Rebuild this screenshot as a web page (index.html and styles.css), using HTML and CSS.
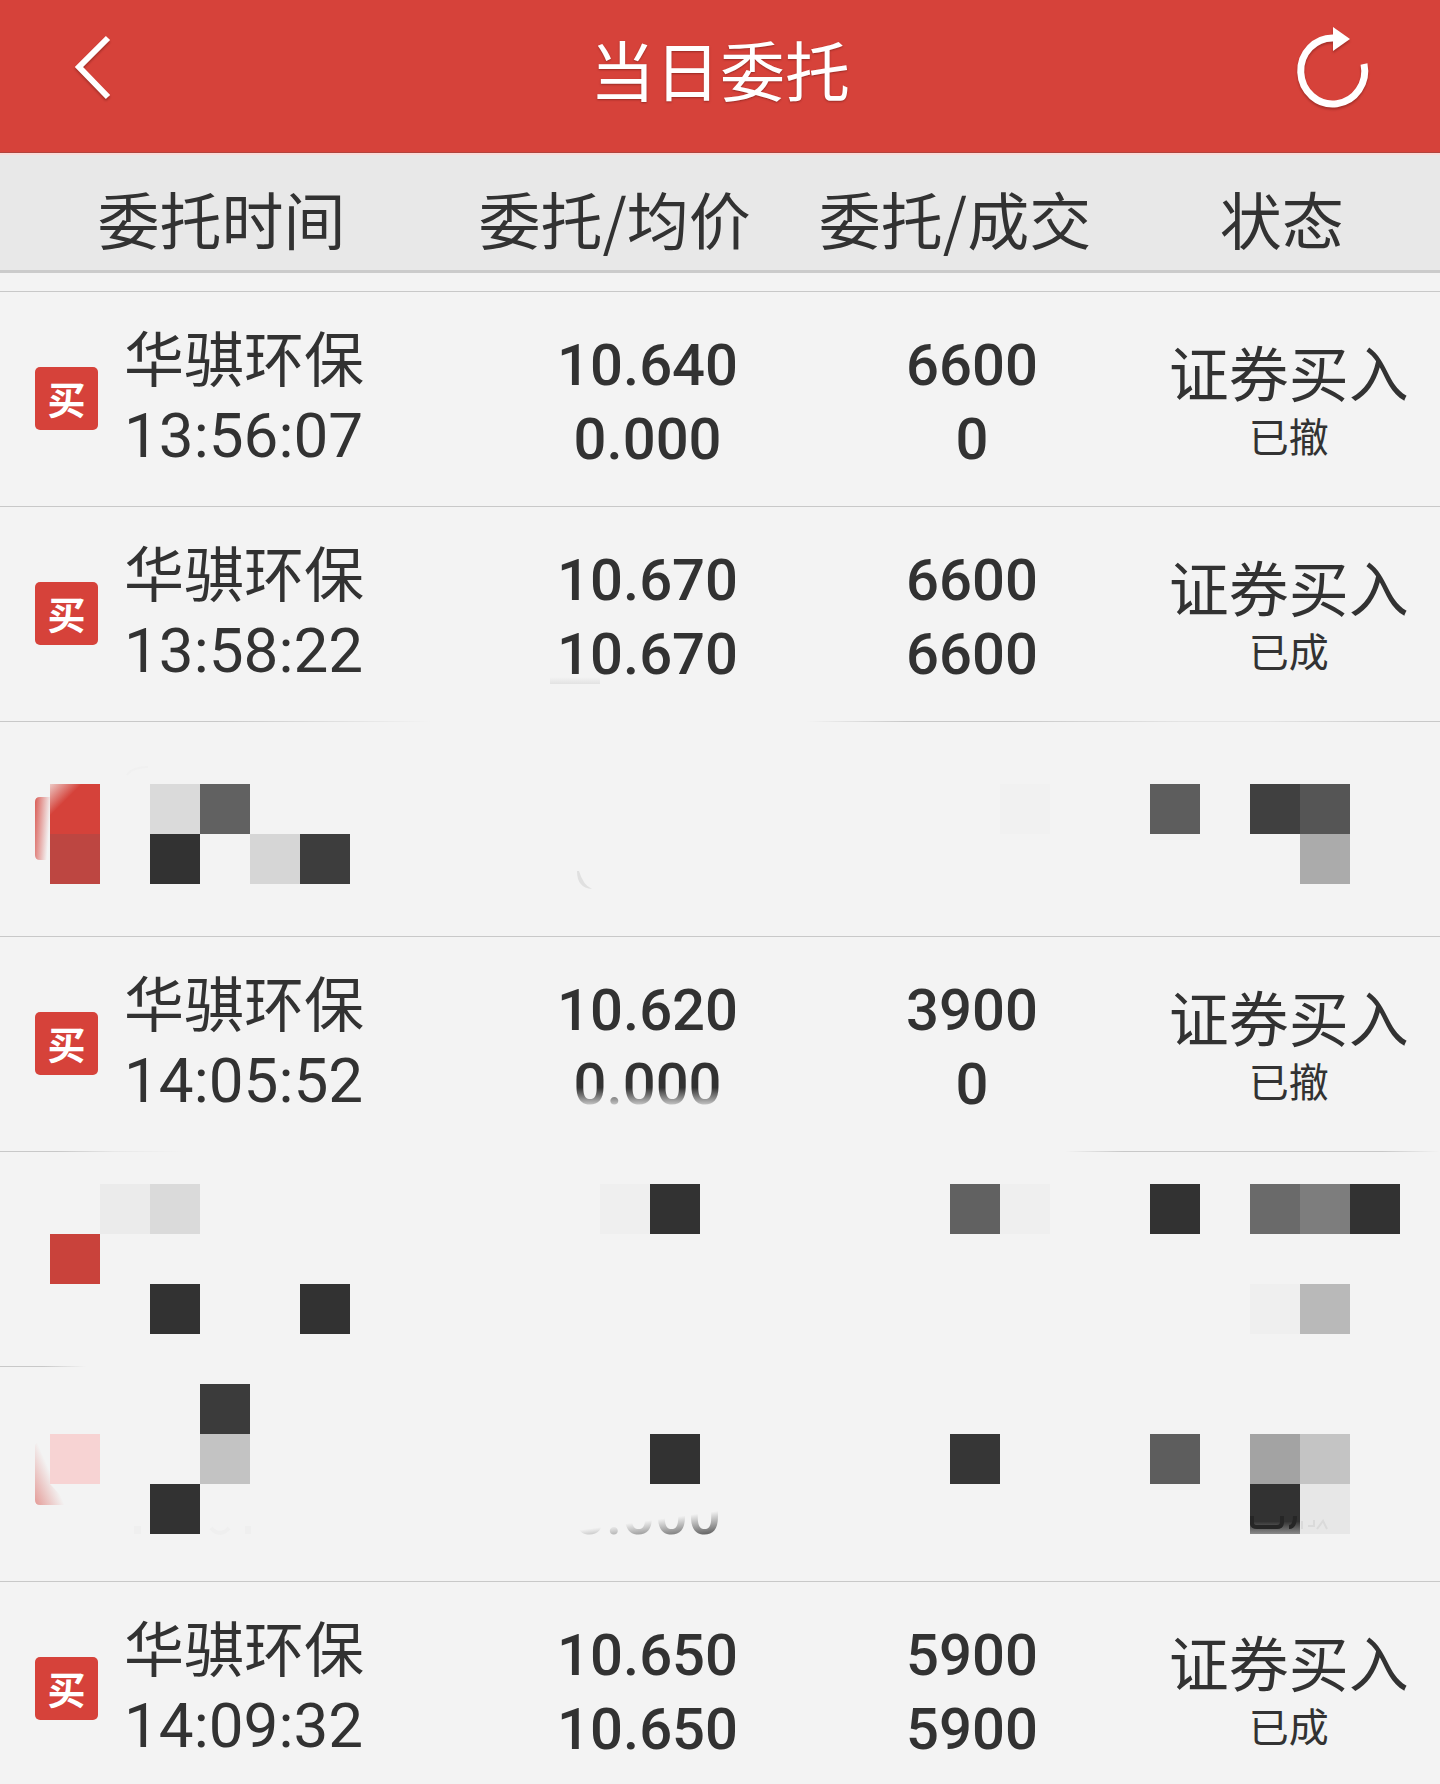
FILE: index.html
```html
<!DOCTYPE HTML>
<html lang="zh-CN">
	<head>
		<meta charset="UTF-8" />
		<meta name="viewport" content="width=device-width, initial-scale=1">
		<title>当日委托</title>
		<link rel="stylesheet" href="styles.css">
	</head>
	<body>
		<header class="topbar">
			<button type="button" class="icon_btn" aria-label="返回">
				<svg width="98" height="100" viewBox="0 0 98 100">
					<path d="M62 20 L33 49 L62 79" fill="none" stroke="#fff" stroke-width="6" />
				</svg>
			</button>
			<h1 class="title">当日委托</h1>
			<button type="button" class="icon_btn" aria-label="刷新">
				<svg width="98" height="100" viewBox="0 0 98 100">
					<path d="M38 20 A32 33 0 1 0 68 46" fill="none" stroke="#fff" stroke-width="7" />
					<path d="M37 9 L54 21 L37 33 Z" fill="#fff" />
				</svg>
			</button>
		</header>

		<table class="orders">
			<thead>
				<tr>
					<th class="col_time">委托时间</th>
					<th class="col_price">委托/均价</th>
					<th class="col_amount">委托/成交</th>
					<th class="col_state">状态</th>
				</tr>
			</thead>
			<tbody>
				<tr class="spacer"><td colspan="4"></td></tr>
				<tr class="order">
					<td>
						<div class="stock">
							<span class="badge">买</span>
							<div><div class="name">华骐环保</div><div class="time">13:56:07</div></div>
						</div>
					</td>
					<td class="num price"><div>10.640</div><div>0.000</div></td>
					<td class="num"><div>6600</div><div>0</div></td>
					<td class="state"><div class="kind">证券买入</div><div class="result">已撤</div></td>
				</tr>
				<tr class="order">
					<td>
						<div class="stock">
							<span class="badge">买</span>
							<div><div class="name">华骐环保</div><div class="time">13:58:22</div></div>
						</div>
					</td>
					<td class="num price"><div>10.670</div><div>10.670</div></td>
					<td class="num"><div>6600</div><div>6600</div></td>
					<td class="state"><div class="kind">证券买入</div><div class="result">已成</div></td>
				</tr>
				<tr class="order line_gap_mid">
					<td colspan="4" class="masked">
						<svg class="mosaic" viewBox="0 0 1440 215" aria-hidden="true">
							<defs>
								<linearGradient id="edge_a" x1="0" y1="0" x2="1" y2="0.3">
									<stop offset="0" stop-color="#d5423a" stop-opacity="0.85" />
									<stop offset="1" stop-color="#d5423a" stop-opacity="0" />
								</linearGradient>
								<linearGradient id="corner" x1="0" y1="0" x2="0.4" y2="0.4">
									<stop offset="0" stop-color="#ecc9c5" />
									<stop offset="0.8" stop-color="#d5423a" />
								</linearGradient>
								<linearGradient id="smudge" x1="0" y1="0" x2="0" y2="1">
									<stop offset="0" stop-color="#f3f3f3" />
									<stop offset="1" stop-color="#e2e2e2" />
								</linearGradient>
							</defs>
							<rect x="550" y="-44" width="50" height="7" fill="url(#smudge)" />
							<path d="M127 54 Q132 46 148 46" fill="none" stroke="#f0f0f0" stroke-width="2" />
							<path d="M577 150 Q577 167 592 168 Q583 164 579 150 Z" fill="#e0e0e0" />
							<path d="M50 76 H40 Q35 76 35 81 V134 Q35 139 40 139 H50 Z" fill="url(#edge_a)" />
							<rect x="50" y="63" width="50" height="50" fill="url(#corner)" />
							<rect x="50" y="113" width="50" height="50" fill="#bd4641" />
							<rect x="150" y="63" width="50" height="50" fill="#dadada" />
							<rect x="200" y="63" width="50" height="50" fill="#616161" />
							<rect x="150" y="113" width="50" height="50" fill="#323232" />
							<rect x="250" y="113" width="50" height="50" fill="#d6d6d6" />
							<rect x="300" y="113" width="50" height="50" fill="#3d3d3d" />
							<rect x="1000" y="63" width="50" height="50" fill="#f1f1f1" />
							<rect x="1150" y="63" width="50" height="50" fill="#5d5d5d" />
							<rect x="1250" y="63" width="50" height="50" fill="#404040" />
							<rect x="1300" y="63" width="50" height="50" fill="#555" />
							<rect x="1300" y="113" width="50" height="50" fill="#ababab" />
						</svg>
					</td>
				</tr>
				<tr class="order">
					<td>
						<div class="stock">
							<span class="badge">买</span>
							<div><div class="name">华骐环保</div><div class="time">14:05:52</div></div>
						</div>
					</td>
					<td class="num price"><div>10.620</div><div class="fading">0.000</div></td>
					<td class="num"><div>3900</div><div>0</div></td>
					<td class="state"><div class="kind">证券买入</div><div class="result">已撤</div></td>
				</tr>
				<tr class="order line_ends">
					<td colspan="4" class="masked">
						<svg class="mosaic" viewBox="0 0 1440 215" aria-hidden="true">
							<rect x="100" y="33" width="50" height="50" fill="#ebebeb" />
							<rect x="150" y="33" width="50" height="50" fill="#dadada" />
							<rect x="50" y="83" width="50" height="50" fill="#c9423b" />
							<rect x="150" y="133" width="50" height="50" fill="#323232" />
							<rect x="300" y="133" width="50" height="50" fill="#323232" />
							<rect x="600" y="33" width="50" height="50" fill="#efefef" />
							<rect x="650" y="33" width="50" height="50" fill="#323232" />
							<rect x="950" y="33" width="50" height="50" fill="#616161" />
							<rect x="1000" y="33" width="50" height="50" fill="#efefef" />
							<rect x="1150" y="33" width="50" height="50" fill="#323232" />
							<rect x="1250" y="33" width="50" height="50" fill="#6a6a6a" />
							<rect x="1300" y="33" width="50" height="50" fill="#7d7d7d" />
							<rect x="1350" y="33" width="50" height="50" fill="#323232" />
							<rect x="1250" y="133" width="50" height="50" fill="#efefef" />
							<rect x="1300" y="133" width="50" height="50" fill="#b9b9b9" />
						</svg>
					</td>
				</tr>
				<tr class="order line_start">
					<td colspan="4" class="masked">
						<svg class="mosaic" viewBox="0 0 1440 215" aria-hidden="true">
							<defs>
								<linearGradient id="edge_b" gradientUnits="userSpaceOnUse" x1="35" y1="139" x2="60" y2="128">
									<stop offset="0" stop-color="#d5423a" stop-opacity="0.5" />
									<stop offset="1" stop-color="#d5423a" stop-opacity="0" />
								</linearGradient>
								<linearGradient id="ghost" gradientUnits="userSpaceOnUse" x1="565" y1="166" x2="569" y2="195">
									<stop offset="0" stop-color="#323232" stop-opacity="0" />
									<stop offset="1" stop-color="#323232" />
								</linearGradient>
								<linearGradient id="block_end" x1="0" y1="0" x2="0" y2="1">
									<stop offset="0.75" stop-color="#323232" />
									<stop offset="1" stop-color="#8a8a8a" />
								</linearGradient>
							</defs>
							<path d="M70 139 H40 Q35 139 35 134 V81 Q35 76 40 76 H50 V118 Z" fill="url(#edge_b)" />
							<rect x="50" y="68" width="50" height="50" fill="#f7d3d3" />
							<rect x="200" y="18" width="50" height="50" fill="#3b3b3b" />
							<rect x="200" y="68" width="50" height="50" fill="#c3c3c3" />
							<rect x="150" y="118" width="50" height="50" fill="#323232" />
							<rect x="134" y="160" width="7" height="8" fill="#efefef" />
							<path d="M211 162 Q220 172 229 162" fill="none" stroke="#efefef" stroke-width="4" />
							<rect x="245" y="160" width="6" height="8" fill="#efefef" />
							<rect x="650" y="68" width="50" height="50" fill="#323232" />
							<rect x="950" y="68" width="50" height="50" fill="#363636" />
							<rect x="1150" y="68" width="50" height="50" fill="#5d5d5d" />
							<rect x="1250" y="68" width="50" height="50" fill="#a3a3a3" />
							<rect x="1300" y="68" width="50" height="50" fill="#c4c4c4" />
							<rect x="1250" y="118" width="50" height="50" fill="url(#block_end)" />
							<rect x="1300" y="118" width="50" height="50" fill="#e7e7e7" />
							<path d="M1252 150 V157 Q1252 161 1257 161 H1277 Q1282 161 1282 156 V150 M1295 150 Q1295 161 1289 161" fill="none" stroke="#262626" stroke-width="4" />
							<path d="M1302 155 V163 M1308 160 H1314 V154 M1317 163 L1323 155 L1327 163" fill="none" stroke="#dadada" stroke-width="2" />
							<text class="ghost" x="647" y="168" text-anchor="middle" fill="url(#ghost)">0.000</text>
						</svg>
					</td>
				</tr>
				<tr class="order">
					<td>
						<div class="stock">
							<span class="badge">买</span>
							<div><div class="name">华骐环保</div><div class="time">14:09:32</div></div>
						</div>
					</td>
					<td class="num price"><div>10.650</div><div>10.650</div></td>
					<td class="num"><div>5900</div><div>5900</div></td>
					<td class="state"><div class="kind">证券买入</div><div class="result">已成</div></td>
				</tr>
			</tbody>
		</table>
	</body>
</html>
```
FILE: styles.css
```css
* {
	box-sizing: border-box;
}
body {
	margin: 0;
	background-color: #f3f3f3;
	color: #323232;
	font-family: "Noto Sans CJK SC", sans-serif;
}

/* top bar */
.topbar {
	display: flex;
	justify-content: space-between;
	align-items: center;
	height: 153px;
	padding: 0 46px 16px;
	background-color: #d6423a;
	border-bottom: 1px solid #b0453e;
}
.icon_btn {
	width: 98px;
	height: 100px;
	padding: 0;
	border: 0;
	background: none;
	cursor: pointer;
}
.icon_btn svg {
	display: block;
	filter: drop-shadow(0 2px 1px rgba(90, 20, 15, .4));
}
.title {
	margin: 0;
	color: #fff;
	font-size: 65px;
	font-weight: 400;
	line-height: 78px;
	text-shadow: 0 1px 2px rgba(90, 20, 15, .5);
}

/* order table */
.orders {
	width: 100%;
	table-layout: fixed;
	border-collapse: separate;
	border-spacing: 0;
}
.orders th {
	height: 120px;
	padding: 10px 0 0;
	background-color: #e8e8e8;
	border-top: 2px solid #fadcda;
	border-bottom: 3px solid #cbcbcb;
	font-size: 62px;
	font-weight: 400;
	line-height: 80px;
	text-align: center;
	white-space: nowrap;
}
.orders .col_time {
	width: 32%;
	padding-right: 18px;
}
.orders .col_price {
	width: 24%;
	padding-right: 38px;
}
.orders .col_amount {
	width: 23%;
	padding-right: 34px;
}
.orders .col_state {
	width: 21%;
	padding-right: 14px;
}
.orders td {
	padding: 0;
	vertical-align: top;
	white-space: nowrap;
}
.spacer td {
	height: 18px;
}
.order {
	height: 215px;
	background: linear-gradient(#c8c8c8, #c8c8c8) top / 100% 1px no-repeat;
}
.order:last-child {
	height: 203px;
}
.line_gap_mid {
	background-image: linear-gradient(to right, #c8c8c8 15%, transparent 30%, transparent 56%, #c8c8c8 63%, #c8c8c8 70%, #e4e4e4 82%, #e4e4e4 88%, #c8c8c8 98%);
}
.line_ends {
	background-image: linear-gradient(to right, #c8c8c8 4%, #e8e8e8 8%, transparent 13%, transparent 74%, #c8c8c8 78%, #c8c8c8 96%, transparent);
}
.line_start {
	background-image: linear-gradient(to right, #c8c8c8 3%, transparent 6%);
}

.stock {
	display: flex;
	align-items: center;
	gap: 26px;
	padding: 27px 0 0 35px;
}
.badge {
	width: 63px;
	height: 63px;
	border-radius: 5px;
	background-color: #d6423a;
	color: #fff;
	font-size: 38px;
	font-weight: 700;
	line-height: 62px;
	text-align: center;
}
.name {
	font-size: 60px;
	line-height: 76px;
}
.time {
	font-family: Roboto, sans-serif;
	font-size: 62px;
	line-height: 84px;
}
.orders .num {
	padding-top: 37px;
	font-family: Roboto, sans-serif;
	font-size: 58px;
	font-weight: 500;
	line-height: 74px;
	text-align: center;
}
.orders .price {
	padding-left: 28px;
}
.fading {
	background: linear-gradient(#323232 55%, #ddd 82%);
	-webkit-background-clip: text;
	background-clip: text;
	color: transparent;
}
.orders .state {
	padding-top: 50px;
	font-family: "Liberation Sans", "Noto Sans CJK SC", sans-serif;
	text-align: center;
}
.kind {
	font-size: 60px;
	line-height: 72px;
}
.result {
	font-size: 40px;
	line-height: 50px;
}

/* hidden orders */
.mosaic {
	display: block;
	width: 100%;
	overflow: visible;
}
.ghost {
	font-family: Roboto, sans-serif;
	font-size: 58px;
	font-weight: 500;
}
```
